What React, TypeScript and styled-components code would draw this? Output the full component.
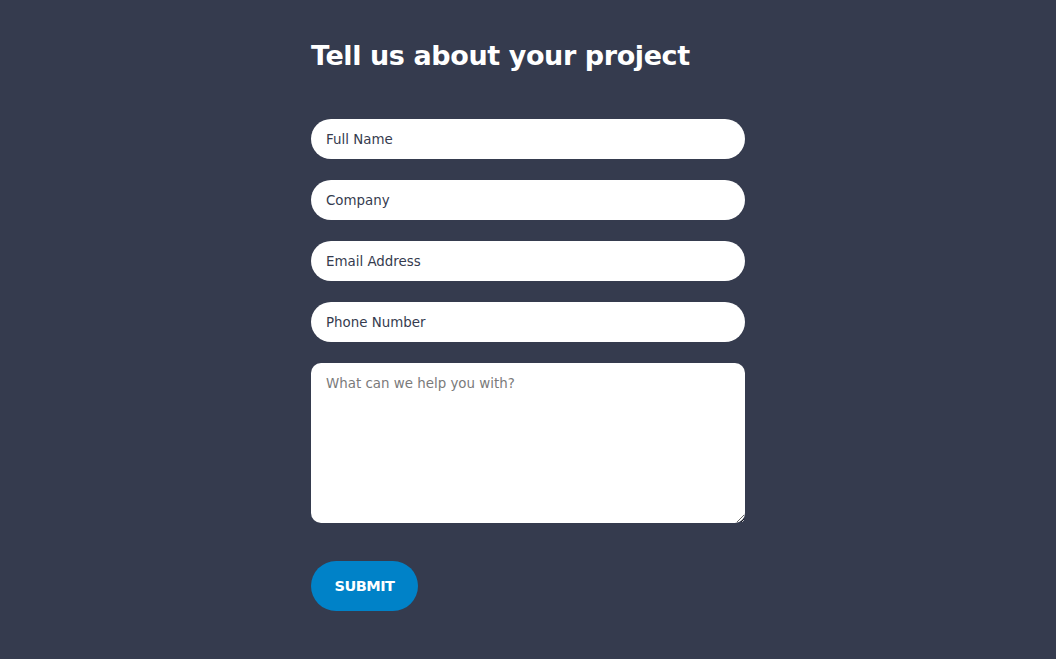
import React from "react";
import styled, { createGlobalStyle } from "styled-components";

const Global = createGlobalStyle`
  html, body { margin: 0; padding: 0; background: #353b4e; }
  body { font-family: "DejaVu Sans", "Open Sans", sans-serif; }
  * { box-sizing: border-box; }
`;

const Page = styled.div`
  min-height: 659px;
  background: #353b4e;
  display: flex;
  justify-content: center;
  padding-top: 38px;
`;

const Form = styled.form`
  width: 434px;
  display: flex;
  flex-direction: column;
`;

const Title = styled.h1`
  margin: 0 0 45px;
  color: #ffffff;
  font-family: "DejaVu Sans", sans-serif;
  font-weight: 700;
  font-size: 27px;
  line-height: 36px;
  letter-spacing: -0.4px;
`;

const Fields = styled.div`
  display: flex;
  flex-direction: column;
  gap: 21px;
`;

const Input = styled.input`
  height: 40px;
  width: 100%;
  border: none;
  border-radius: 20px;
  background: #fff;
  padding: 0 15px;
  font-family: "DejaVu Sans", sans-serif;
  font-size: 13.4px;
  color: #353b4e;
  outline: none;
  &::placeholder { color: #353b4e; opacity: 1; }
`;

const TextArea = styled.textarea`
  height: 160px;
  width: 100%;
  border: none;
  border-radius: 10px;
  background: #fff;
  padding: 13px 15px 12px;
  font-family: "DejaVu Sans", sans-serif;
  font-size: 13.4px;
  color: #353b4e;
  outline: none;
  resize: vertical;
  &::placeholder { color: #7a7a7a; opacity: 1; }
`;

const Submit = styled.button`
  margin-top: 38px;
  align-self: flex-start;
  width: 107px;
  height: 50px;
  padding: 0;
  border: none;
  border-radius: 25px;
  background: #0082c8;
  color: #fff;
  font-family: "DejaVu Sans", sans-serif;
  font-weight: 700;
  font-size: 14.5px;
  letter-spacing: -0.5px;
  cursor: pointer;
`;

export default function App() {
  return (
    <>
      <Global />
      <Page>
        <Form onSubmit={(e) => e.preventDefault()}>
          <Title>Tell us about your project</Title>
          <Fields>
            <Input placeholder="Full Name" />
            <Input placeholder="Company" />
            <Input placeholder="Email Address" />
            <Input placeholder="Phone Number" />
            <TextArea placeholder="What can we help you with?" />
          </Fields>
          <Submit type="submit">SUBMIT</Submit>
        </Form>
      </Page>
    </>
  );
}
